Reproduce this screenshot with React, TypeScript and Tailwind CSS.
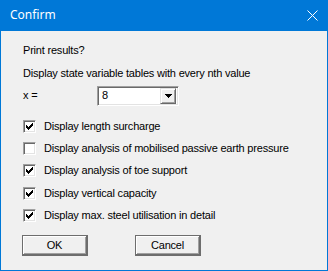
import React from 'react';

const options = [
  { label: 'Display length surcharge', checked: true, top: 'mt-[9px]' },
  { label: 'Display analysis of mobilised passive earth pressure', checked: false, top: 'mt-0' },
  { label: 'Display analysis of toe support', checked: true, top: 'mt-0' },
  { label: 'Display vertical capacity', checked: true, top: 'mt-[1px]' },
  { label: 'Display max. steel utilisation in detail', checked: true, top: 'mt-0' },
];

function CheckBox({ checked }: { checked: boolean }) {
  return (
    <div className="w-[13px] h-[13px] border border-t-[#a0a0a0] border-l-[#a0a0a0] border-b-white border-r-white bg-white shadow-[inset_1px_1px_0_#696969,inset_-1px_-1px_0_#e3e3e3] flex items-center justify-center shrink-0">
      {checked && (
        <svg width="7" height="7" viewBox="0 0 7 7" shapeRendering="crispEdges">
          <path d="M0 2h1v3h-1zM1 3h1v3h-1zM2 4h1v3h-1zM3 3h1v3h-1zM4 2h1v3h-1zM5 1h1v3h-1zM6 0h1v3h-1z" fill="#000" />
        </svg>
      )}
    </div>
  );
}

function Button({ children }: { children: React.ReactNode }) {
  return (
    <button className="w-[66px] h-[21px] bg-[#f0f0f0] border border-[#6d6d6d] border-b-2 border-r-2 shadow-[inset_1px_1px_0_#ffffff,inset_-1px_-1px_0_#a0a0a0] text-[11px] text-black leading-none">
      {children}
    </button>
  );
}

export default function App() {
  return (
    <div className="w-[328px] h-[271px] bg-[#0078d7] flex flex-col font-['Liberation_Sans',Arial,sans-serif]">
      <div className="h-[31px] flex items-center justify-between pl-[10px] pr-[10px] shrink-0">
        <span className="text-white text-[12px] font-['Noto_Sans',sans-serif] leading-none -mt-[1px]">Confirm</span>
        <svg width="11" height="11" viewBox="0 0 11 11">
          <path d="M0.5 0.5L10.5 10.5M10.5 0.5L0.5 10.5" stroke="#fff" strokeWidth="1" />
        </svg>
      </div>
      <div className="flex-1 mx-[1px] mb-[1px] bg-[#f0f0f0] flex flex-col pl-[22px] text-[11px] tracking-[-0.2px] text-black">
        <div className="h-[22px] mt-[8px] flex items-center">Print results?</div>
        <div className="h-[22px] mt-[1px] flex items-center">Display state variable tables with every nth value</div>
        <div className="h-[21px] mt-[1px] flex items-center">
          <span className="w-[74px]">x =</span>
          <div className="w-[82px] h-[20px] bg-white border border-t-[#a0a0a0] border-l-[#a0a0a0] border-b-white border-r-white shadow-[inset_1px_1px_0_#696969,inset_-1px_-1px_0_#e3e3e3] flex items-center pl-[4px] pr-[2px]">
            <span className="flex-1">8</span>
            <div className="w-[16px] h-[16px] bg-[#f0f0f0] border border-[#e3e3e3] border-b-[#696969] border-r-[#696969] shadow-[inset_1px_1px_0_#ffffff,inset_-1px_-1px_0_#a0a0a0] flex items-center justify-center">
              <svg width="7" height="4" viewBox="0 0 7 4" shapeRendering="crispEdges">
                <path d="M0 0h7v1h-7zM1 1h5v1h-5zM2 2h3v1h-3zM3 3h1v1h-1z" fill="#000" />
              </svg>
            </div>
          </div>
        </div>
        {options.map((o) => (
          <div key={o.label} className={`h-[22px] flex items-center gap-[8px] ${o.top}`}>
            <CheckBox checked={o.checked} />
            <span>{o.label}</span>
          </div>
        ))}
        <div className="flex gap-[47px] mt-[9px] -ml-[1px]">
          <Button>OK</Button>
          <Button>Cancel</Button>
        </div>
      </div>
    </div>
  );
}
